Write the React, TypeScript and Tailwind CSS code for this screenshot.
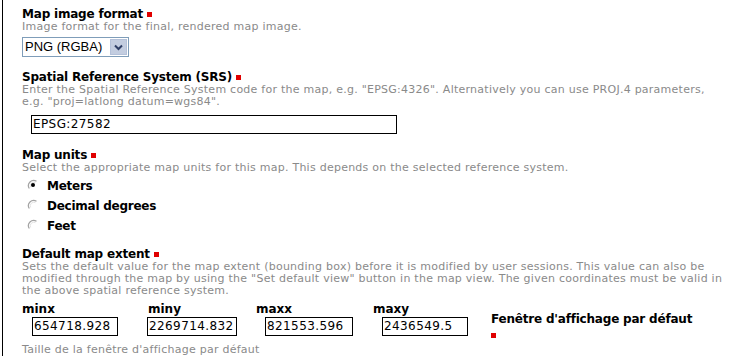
import React from "react";

const font = { fontFamily: '"DejaVu Sans", Verdana, sans-serif' };

function Req() {
    return <span className="inline-block w-[5px] h-[5px] bg-[#e00000] ml-[4px] mb-[1px]" />;
}

function Title({ children, className = "" }: { children: React.ReactNode; className?: string }) {
    return (
        <div className={`text-[12px] leading-[14px] font-bold text-black tracking-[-0.2px] whitespace-nowrap ${className}`}>
            {children}
            <Req />
        </div>
    );
}

function Desc({ children, className = "" }: { children: React.ReactNode; className?: string }) {
    return (
        <div className={`text-[11px] leading-[12px] text-[#8a8a8a] tracking-[0.25px] whitespace-nowrap ${className}`}>
            {children}
        </div>
    );
}

function Radio({ checked }: { checked?: boolean }) {
    return (
        <svg width="12" height="12" viewBox="0 0 12 12" className="shrink-0">
            <path d="M9.5 2.3 A5.2 5.2 0 0 0 2.3 9.5" stroke="#a3a3a3" strokeWidth="1.2" fill="none" />
            <path d="M8.4 3.6 A3.6 3.6 0 0 0 3.6 8.4" stroke="#e4e4e4" strokeWidth="1" fill="none" />
            {checked && <circle cx="6" cy="6" r="2" fill="#000" />}
        </svg>
    );
}

function CoordInput({ value, width }: { value: string; width: string }) {
    return (
        <div
            className={`${width} h-[19px] border border-black bg-white text-[12px] leading-[17px] tracking-[0.4px] text-black pl-px overflow-hidden whitespace-nowrap`}
        >
            {value}
        </div>
    );
}

const units = [
    { label: "Meters", checked: true },
    { label: "Decimal degrees" },
    { label: "Feet" },
];

export default function App() {
    return (
        <div className="w-[747px] h-[356px] bg-white overflow-hidden pl-[2px]" style={font}>
            <div className="h-full border-l border-black pl-[19px] pt-[7px]">
                {/* map image format */}
                <Title>Map image format</Title>
                <Desc>Image format for the final, rendered map image.</Desc>
                <div className="mt-[4px] w-[107px] h-[20px] border border-[#7f9db9] flex items-stretch bg-white">
                    <div
                        className="flex-1 text-[13px] leading-[18px] pl-[2px] text-black"
                        style={{ fontFamily: '"Liberation Sans", Arial, sans-serif' }}
                    >
                        PNG (RGBA)
                    </div>
                    <div className="w-[17px] m-px bg-[#c3cde0] border border-[#b4c1d9] flex items-center justify-center">
                        <svg width="9" height="7" viewBox="0 0 9 7">
                            <path d="M1 1.5 L4.5 5 L8 1.5" stroke="#2f3f66" strokeWidth="2" fill="none" />
                        </svg>
                    </div>
                </div>

                {/* srs */}
                <Title className="mt-[13px]">Spatial Reference System (SRS)</Title>
                <Desc>
                    Enter the Spatial Reference System code for the map, e.g. "EPSG:4326". Alternatively you can use PROJ.4 parameters,
                    <br />
                    e.g. "proj=latlong datum=wgs84".
                </Desc>
                <div className="ml-[9px] mt-[7px]">
                    <CoordInput value="EPSG:27582" width="w-[366px]" />
                </div>

                {/* units */}
                <Title className="mt-[14px]">Map units</Title>
                <Desc>Select the appropriate map units for this map. This depends on the selected reference system.</Desc>
                <div className="mt-[2px]">
                    {units.map((u) => (
                        <div key={u.label} className="h-[20px] flex items-start">
                            <div className="ml-[5px] mt-[3px]">
                                <Radio checked={u.checked} />
                            </div>
                            <span className="ml-[8px] text-[12px] leading-[20px] font-bold tracking-[-0.25px] text-black">
                                {u.label}
                            </span>
                        </div>
                    ))}
                </div>

                {/* extent */}
                <Title className="mt-[11px]">Default map extent</Title>
                <Desc>
                    Sets the default value for the map extent (bounding box) before it is modified by user sessions. This value can also be
                    <br />
                    modified through the map by using the "Set default view" button in the map view. The given coordinates must be valid in
                    <br />
                    the above spatial reference system.
                </Desc>
                <div className="mt-[5px] flex">
                    <div className="w-[125px]">
                        <div className="text-[12px] leading-[14px] font-bold">minx</div>
                        <div className="mt-px ml-[10px]">
                            <CoordInput value="654718.928" width="w-[86px]" />
                        </div>
                    </div>
                    <div className="w-[109px]">
                        <div className="text-[12px] leading-[14px] font-bold ml-px">miny</div>
                        <div className="mt-px">
                            <CoordInput value="2269714.832" width="w-[90px]" />
                        </div>
                    </div>
                    <div className="w-[117px]">
                        <div className="text-[12px] leading-[14px] font-bold">maxx</div>
                        <div className="mt-px ml-[9px]">
                            <CoordInput value="821553.596" width="w-[88px]" />
                        </div>
                    </div>
                    <div className="w-[118px]">
                        <div className="text-[12px] leading-[14px] font-bold">maxy</div>
                        <div className="mt-px ml-[9px]">
                            <CoordInput value="2436549.5" width="w-[86px]" />
                        </div>
                    </div>
                    <div className="mt-[10px] text-[12px] leading-[14px] font-bold tracking-[-0.2px] whitespace-nowrap">
                        Fenêtre d'affichage par défaut
                        <div className="h-[14px] flex items-end pb-[2px]">
                            <span className="inline-block w-[5px] h-[5px] bg-[#e00000]" />
                        </div>
                    </div>
                </div>
                <Desc className="mt-[4px]">Taille de la fenêtre d'affichage par défaut</Desc>
            </div>
        </div>
    );
}
